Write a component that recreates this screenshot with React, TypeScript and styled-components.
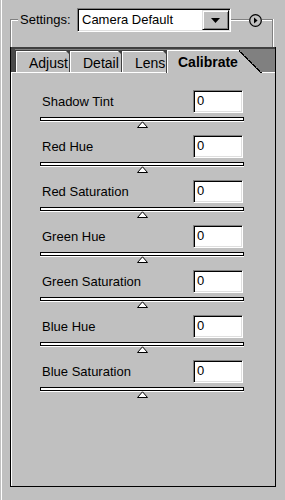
import React from "react";
import styled, { createGlobalStyle } from "styled-components";

interface SliderDef {
  label: string;
  value: number;
}

const SLIDERS: SliderDef[] = [
  { label: "Shadow Tint", value: 0 },
  { label: "Red Hue", value: 0 },
  { label: "Red Saturation", value: 0 },
  { label: "Green Hue", value: 0 },
  { label: "Green Saturation", value: 0 },
  { label: "Blue Hue", value: 0 },
  { label: "Blue Saturation", value: 0 },
];

const TABS = [
  { name: "Adjust", width: 54 },
  { name: "Detail", width: 52 },
  { name: "Lens", width: 45 },
];

const GlobalStyle = createGlobalStyle`
  html, body {
    margin: 0;
    background: #c0c0c0;
  }
  body {
    font-family: "Liberation Sans", Arial, sans-serif;
    color: #000;
  }
`;

const App = () => {
  return (
    <Page>
      <GlobalStyle />
      <Header>
        <LeftArm />
        <SettingsLabel>Settings:</SettingsLabel>
        <Select>
          <SelectText>Camera Default</SelectText>
          <DropButton>
            <svg width="9" height="5" viewBox="0 0 9 5">
              <polygon points="0,0 9,0 4.5,5" fill="#000" />
            </svg>
          </DropButton>
        </Select>
        <MidLine />
        <MenuButton>
          <svg width="13" height="13" viewBox="0 0 13 13">
            <circle cx="6.5" cy="6.5" r="5.8" fill="#c0c0c0" stroke="#000" strokeWidth="1.2" />
            <polygon points="5,3.5 8.6,6.5 5,9.5" fill="#000" />
          </svg>
        </MenuButton>
        <RightArm />
      </Header>
      <Panel>
        <TabStrip>
          {TABS.map((t) => (
            <Tab key={t.name} $width={t.width}>
              {t.name}
            </Tab>
          ))}
          <ActiveTab>Calibrate</ActiveTab>
        </TabStrip>
        <Content>
          {SLIDERS.map((s) => (
            <Row key={s.label}>
              <RowTop>
                <RowLabel>{s.label}</RowLabel>
                <ValueBox>{s.value}</ValueBox>
              </RowTop>
              <Slider>
                <Track />
                <Thumb style={{ left: `calc(${((s.value + 100) / 200) * 100}% - 5.5px)` }}>
                  <svg width="11" height="7" viewBox="0 0 11 7">
                    <polygon points="0.5,6.5 5.5,0.8 10.5,6.5" fill="#fff" stroke="#000" strokeWidth="1" />
                  </svg>
                </Thumb>
              </Slider>
            </Row>
          ))}
        </Content>
      </Panel>
    </Page>
  );
};

export default App;

const Page = styled.div`
  height: 500px;
  box-sizing: border-box;
  padding-left: 10px;
  display: flex;
  flex-direction: column;
  background: #c0c0c0;
  box-shadow: inset 1px 0 #c0c0c0, inset 2px 0 #fff;
`;

const Header = styled.div`
  display: flex;
  align-items: flex-start;
  width: 263px;
  height: 47px;
`;

const LeftArm = styled.div`
  box-sizing: border-box;
  width: 8px;
  align-self: stretch;
  margin-top: 19px;
  border-top: 1px solid #808080;
  border-left: 1px solid #808080;
  box-shadow: inset 1px 1px 0 #fff;
`;

const SettingsLabel = styled.div`
  box-sizing: border-box;
  width: 59px;
  padding-left: 2px;
  margin-top: 12px;
  font-size: 13px;
  line-height: 16px;
`;

const Select = styled.div`
  box-sizing: border-box;
  width: 154px;
  height: 24px;
  margin-top: 8px;
  display: flex;
  align-items: center;
  background: #fff;
  border-top: 1px solid #808080;
  border-left: 1px solid #808080;
  border-bottom: 1px solid #fff;
  border-right: 1px solid #fff;
  box-shadow: inset 1px 1px 0 #000, inset -1px -1px 0 #dfdfdf;
  padding: 1px;
`;

const SelectText = styled.div`
  flex: 1;
  padding-left: 3px;
  font-size: 13px;
  line-height: 16px;
`;

const DropButton = styled.div`
  box-sizing: border-box;
  width: 27px;
  height: 20px;
  display: flex;
  align-items: center;
  justify-content: center;
  background: #c0c0c0;
  border-top: 1px solid #dfdfdf;
  border-left: 1px solid #dfdfdf;
  border-right: 1px solid #000;
  border-bottom: 1px solid #000;
  box-shadow: inset 1px 1px 0 #fff, inset -1px -1px 0 #808080;
`;

const MidLine = styled.div`
  flex: 1;
  height: 1px;
  margin-top: 19px;
  background: #808080;
  box-shadow: 0 1px 0 #fff;
`;

const MenuButton = styled.div`
  width: 13px;
  height: 13px;
  margin-top: 14px;
  display: flex;
  svg {
    display: block;
  }
`;

const RightArm = styled.div`
  box-sizing: border-box;
  width: 11px;
  align-self: stretch;
  margin-top: 19px;
  border-top: 1px solid #808080;
  border-right: 1px solid #808080;
  box-shadow: inset 0 1px 0 #fff, 1px 0 0 #fff;
`;

const Panel = styled.div`
  box-sizing: border-box;
  width: 266px;
  height: 440px;
  display: flex;
  flex-direction: column;
  border-left: 1px solid #000;
  border-right: 1px solid #000;
  border-bottom: 1px solid #000;
`;

const TabStrip = styled.div`
  box-sizing: border-box;
  height: 26px;
  display: flex;
  align-items: flex-end;
  padding-left: 4px;
  background: #808080;
  border-top: 2px solid #404040;
  border-bottom: 1px solid #fff;
  box-shadow: inset 4px 0 0 #4a4a4a;
`;

const Tab = styled.div<{ $width: number }>`
  position: relative;
  box-sizing: border-box;
  width: ${(p) => p.$width}px;
  height: 22px;
  padding: 4px 0 0 13px;
  font-size: 14px;
  line-height: 16px;
  background: #c0c0c0;
  border-top: 1px solid #404040;
  border-left: 1px solid #404040;
  box-shadow: inset 1px 1px 0 #fff;
  white-space: nowrap;
  &::after {
    content: "";
    position: absolute;
    top: -1px;
    right: 0;
    border-top: 4px solid #404040;
    border-left: 4px solid transparent;
  }
`;

const ActiveTab = styled.div`
  position: relative;
  box-sizing: border-box;
  width: 96px;
  height: 23px;
  margin-bottom: -1px;
  padding: 4px 0 0 11px;
  font-size: 14px;
  line-height: 16px;
  font-weight: bold;
  border-left: 1px solid #404040;
  background:
    linear-gradient(#fff, #fff) left 1px top / calc(100% - 24px) 1px no-repeat,
    linear-gradient(#404040, #404040) left top / calc(100% - 23px) 1px no-repeat,
    linear-gradient(#c0c0c0, #c0c0c0) left top / calc(100% - 23px) 100% no-repeat,
    linear-gradient(
        to top right,
        #c0c0c0 calc(50% - 1px),
        #000 calc(50% - 1px),
        #000 50%,
        transparent 50%
      )
      right top / 23px 100% no-repeat;
  box-shadow: inset 1px 0 0 #fff;
`;

const Content = styled.div`
  flex: 1;
  display: flex;
  flex-direction: column;
  gap: 8px;
  padding: 17px 31px 0 29px;
  background: #c0c0c0;
  box-shadow: inset 1px 0 0 #fff;
`;

const Row = styled.div`
  display: flex;
  flex-direction: column;
  gap: 4px;
`;

const RowTop = styled.div`
  display: flex;
  align-items: center;
  justify-content: space-between;
  height: 23px;
`;

const RowLabel = styled.div`
  padding: 1px 0 0 2px;
  font-size: 13px;
  line-height: 16px;
`;

const ValueBox = styled.div`
  box-sizing: border-box;
  width: 50px;
  height: 23px;
  margin-right: 1px;
  padding: 2px 0 0 3px;
  font-size: 13px;
  line-height: 16px;
  background: #fff;
  border-top: 1px solid #808080;
  border-left: 1px solid #808080;
  border-bottom: 1px solid #fff;
  border-right: 1px solid #fff;
  box-shadow: inset 1px 1px 0 #000, inset -1px -1px 0 #dfdfdf;
`;

const Slider = styled.div`
  position: relative;
  height: 10px;
`;

const Track = styled.div`
  box-sizing: border-box;
  height: 4px;
  background: #fff;
  border: 1px solid #000;
  box-shadow: 0 1px 0 #fff;
`;

const Thumb = styled.div`
  position: absolute;
  top: 4px;
  width: 11px;
  height: 7px;
  svg {
    display: block;
  }
`;
